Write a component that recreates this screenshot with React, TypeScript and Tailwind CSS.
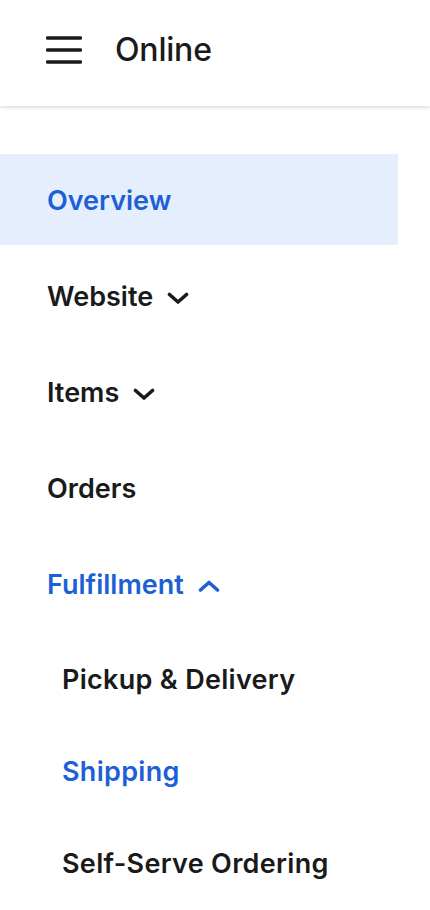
import { useState } from "react";

type NavItem = {
  label: string;
  active?: boolean;
  selected?: boolean;
  chevron?: "down" | "up";
};

const topItems: NavItem[] = [
  { label: "Overview", active: true, selected: true },
  { label: "Website", chevron: "down" },
  { label: "Items", chevron: "down" },
  { label: "Orders" },
  { label: "Fulfillment", active: true, chevron: "up" },
];

const subItems: NavItem[] = [
  { label: "Pickup & Delivery" },
  { label: "Shipping", active: true },
  { label: "Self-Serve Ordering" },
];

const Chevron = ({ dir }: { dir: "down" | "up" }) => (
  <svg width="22" height="14" viewBox="0 0 22 14" fill="none" className="shrink-0">
    <path
      d={dir === "down" ? "M2.5 3.5 L11 11 L19.5 3.5" : "M2.5 11 L11 3.5 L19.5 11"}
      stroke="currentColor"
      strokeWidth="3.6"
      strokeLinecap="round"
      strokeLinejoin="round"
    />
  </svg>
);

const Hamburger = () => (
  <svg width="36" height="28" viewBox="0 0 36 28" fill="none">
    <path d="M1.5 2h33M1.5 14h33M1.5 26h33" stroke="currentColor" strokeWidth="3.4" strokeLinecap="round" />
  </svg>
);

export default function App() {
  const [open, setOpen] = useState(true);

  return (
    <div className="min-h-[910px] bg-white text-[#1a1a1a] [font-family:Inter,'Liberation_Sans',sans-serif]">
      <header className="flex h-[106px] items-center gap-[33px] pb-[6px] pl-[46px] shadow-[0_2px_3px_rgba(0,0,0,0.12)]">
        <button type="button" className="flex text-[#1a1a1a]" onClick={() => setOpen(!open)}>
          <Hamburger />
        </button>
        <h1 className="text-[32px] font-medium leading-none tracking-[-0.2px]">Online</h1>
      </header>

      <nav className="flex flex-col pt-[48px]">
        {topItems.map((item) => (
          <div
            key={item.label}
            className={`mb-[5px] flex h-[91px] w-[398px] items-center gap-[14px] pl-[47px] pt-[4px] text-[27px] font-semibold ${
              item.selected ? "bg-[#e4eefd]" : ""
            } ${item.active ? "text-[#1d5fd6]" : "text-[#1a1a1a]"}`}
          >
            <span>{item.label}</span>
            {item.chevron ? <Chevron dir={item.chevron} /> : null}
          </div>
        ))}
        <div className="flex flex-col">
          {subItems.map((item) => (
            <div
              key={item.label}
              className={`flex h-[92px] items-center pl-[62px] text-[27px] font-semibold tracking-[0.3px] ${
                item.active ? "text-[#1d5fd6]" : "text-[#1a1a1a]"
              }`}
            >
              {item.label}
            </div>
          ))}
        </div>
      </nav>
    </div>
  );
}
